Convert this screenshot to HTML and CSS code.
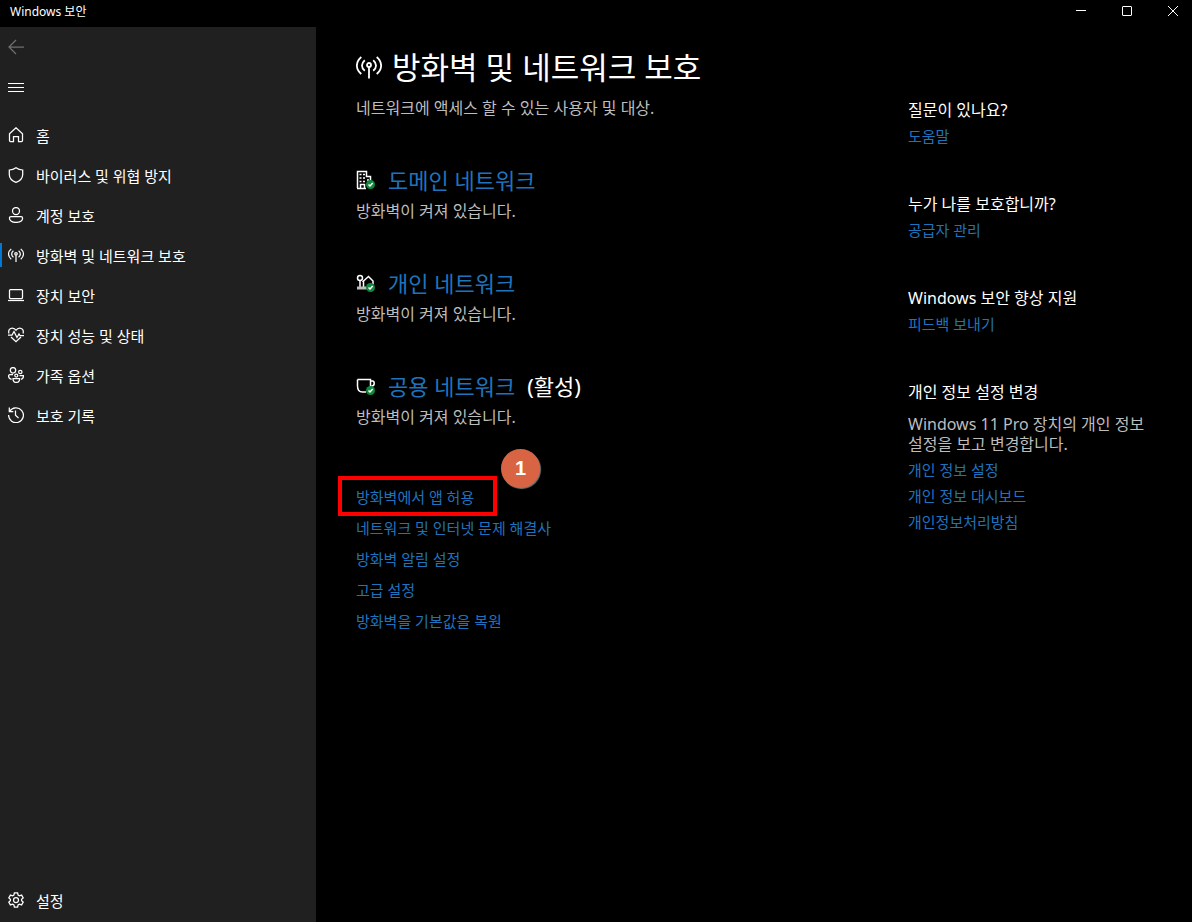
FILE: index.html
```html
<!DOCTYPE html>
<html lang="ko">
<head>
  <meta charset="UTF-8">
  <meta name="viewport" content="width=device-width, initial-scale=1.0">
  <title>Windows 보안</title>
  <link rel="stylesheet" href="styles.css">
</head>
<body>
  <header class="titlebar">
    <span class="titlebar-name">Windows 보안</span>
    <div class="window-controls">
      <button type="button" aria-label="최소화">
        <svg width="12" height="12" viewBox="0 0 12 12"><path d="M1 5.5h10"/></svg>
      </button>
      <button type="button" aria-label="최대화">
        <svg width="12" height="12" viewBox="0 0 12 12"><rect x="1.5" y="1.5" width="9" height="9" rx="0.5"/></svg>
      </button>
      <button type="button" aria-label="닫기">
        <svg width="12" height="12" viewBox="0 0 12 12"><path d="M1 1l10 10M11 1L1 11"/></svg>
      </button>
    </div>
  </header>

  <div class="layout">
    <nav class="sidebar">
      <button type="button" class="nav-button back" aria-label="뒤로" disabled>
        <svg class="icon" viewBox="0 0 16 16"><path d="M16 8H1M8 1L1 8l7 7"/></svg>
      </button>
      <button type="button" class="nav-button menu" aria-label="메뉴">
        <svg class="icon" viewBox="0 0 16 16"><path d="M0 4.5h16M0 8.5h16M0 12.5h16"/></svg>
      </button>

      <ul class="nav-list">
        <li><a class="nav-item" href="#home">
          <svg class="icon" viewBox="0 0 16 16"><path d="M1.5 6.8L8 .8l6.500 6V13.500q0 1-1 1h-3V9.500h-5v5h-3q-1 0-1-1z"/></svg>
          <span>홈</span>
        </a></li>
        <li><a class="nav-item" href="#virus">
          <svg class="icon" viewBox="0 0 16 16"><path d="M8 .7c2 1.500 4.200 2.200 6.700 2.300v4.500c0 3.800-2.500 6.300-6.700 7.900-4.200-1.600-6.700-4.100-6.700-7.900V3C3.800 2.900 6 2.200 8 .7z"/></svg>
          <span>바이러스 및 위협 방지</span>
        </a></li>
        <li><a class="nav-item" href="#account">
          <svg class="icon" viewBox="0 0 16 16"><circle cx="8" cy="4" r="3.500"/><path d="M3 9.500h10c1 0 1.600.6 1.600 1.500 0 2.600-2.700 4.400-6.600 4.400S1.400 13.600 1.400 11c0-.9.6-1.500 1.600-1.500z"/></svg>
          <span>계정 보호</span>
        </a></li>
        <li><a class="nav-item active" href="#firewall" aria-current="page">
          <svg class="icon" viewBox="0 0 26 24"><use href="#antenna"/></svg>
          <span>방화벽 및 네트워크 보호</span>
        </a></li>
        <li><a class="nav-item" href="#device">
          <svg class="icon" viewBox="0 0 16 16"><rect x="1.500" y="2.500" width="13" height="9" rx="1"/><path d="M0 13.500h16"/></svg>
          <span>장치 보안</span>
        </a></li>
        <li><a class="nav-item" href="#health">
          <svg class="icon" viewBox="0 0 16 16"><path d="M1 6.500C-.2 2.800 2.300 1 4.300 1 6 1 7.300 2 8 3.200 8.700 2 10 1 11.700 1c2 0 4.500 1.800 3.300 5.500M3 10l5 4.700 5-4.700M0 8h4l2-3.500 3 6L11 7l1 1.500h4"/></svg>
          <span>장치 성능 및 상태</span>
        </a></li>
        <li><a class="nav-item" href="#family">
          <svg class="icon" viewBox="0 0 16 16"><circle cx="5" cy="3.300" r="2.700"/><circle cx="12.300" cy="5" r="1.700"/><circle cx="8.300" cy="8.500" r="1.500"/><path d="M5 7.500H1.800C.9 7.500.6 8.200.6 9c0 1.800 1.200 3 3 3.300M11.500 8.500h3.900c.3 2.200-.8 3.500-2.400 3.800M5 11.700h6.600c0 2.500-1.300 3.700-3.300 3.700S5 14.200 5 11.700z"/></svg>
          <span>가족 옵션</span>
        </a></li>
        <li><a class="nav-item" href="#history">
          <svg class="icon" viewBox="0 0 16 16"><path d="M1.300 .5v4h4M1.600 4.500A7.400 7.400 0 1 1 .6 8M7.500 3.500V8.300l3 2.700"/></svg>
          <span>보호 기록</span>
        </a></li>
      </ul>

      <a class="nav-item settings" href="#settings">
        <svg class="icon" viewBox="0 0 16 16"><circle cx="8" cy="8" r="2.500"/><path d="M6.400.8h3.200l.5 2.200 1.300.8 2.200-.7 1.600 2.800L13.600 7.300v1.400l1.600 1.400-1.600 2.800-2.200-.7-1.300.8-.5 2.200H6.400L5.900 13l-1.300-.8-2.200.7L.8 10.100l1.600-1.400V7.300L.8 5.900l1.600-2.800 2.200.7L5.900 3z"/></svg>
        <span>설정</span>
      </a>
    </nav>

    <main class="content">
      <h1>
        <svg class="title-icon" viewBox="0 0 26 24">
          <g id="antenna">
            <path d="M5.300 2C-.6 7-.6 14 5.300 19M20.700 2c5.900 5 5.900 12 0 17M8.800 5.200c-3.800 3.200-3.800 7.500 0 10.600M17.200 5.200c3.800 3.200 3.800 7.500 0 10.600M13 12v11.500"/>
            <circle cx="13" cy="10" r="2"/>
          </g>
        </svg>
        방화벽 및 네트워크 보호
      </h1>
      <p class="description">네트워크에 액세스 할 수 있는 사용자 및 대상.</p>

      <section class="network">
        <h2>
          <svg class="network-icon" viewBox="0 0 20 20">
            <path d="M1.500 18V1.500h9v5h4V11M1 18.500h9M4.500 18v-3.500h4V18"/>
            <path d="M3.500 4.500h2M7 4.500h2M3.500 8h2M7 8h2M3.500 11.500h2M7 11.500h2M11 10h2"/>
            <g id="check">
              <circle class="check-disc" cx="14.500" cy="14.500" r="4.500"/>
              <path class="check-mark" d="M12.500 14.500l1.500 1.500 2.700-3"/>
            </g>
          </svg>
          <a href="#domain">도메인 네트워크</a>
        </h2>
        <p>방화벽이 켜져 있습니다.</p>
      </section>

      <section class="network">
        <h2>
          <svg class="network-icon" viewBox="0 0 20 20">
            <circle cx="4" cy="5" r="2.500"/>
            <path d="M4 7.500V14M7.500 14V8l5-4.500 4.500 4.500v3M7.500 8L6.500 9"/>
            <path class="ground" d="M1 15h10"/>
            <use href="#check"/>
          </svg>
          <a href="#private">개인 네트워크</a>
        </h2>
        <p>방화벽이 켜져 있습니다.</p>
      </section>

      <section class="network">
        <h2>
          <svg class="network-icon" viewBox="0 0 20 20">
            <path d="M1.500 3.500h13v7.500M1.500 3.500V10c0 4 2 6 5 6H10M14.500 5h2c1.200 0 1.700 1 1.700 2.500S17 10 15.500 10"/>
            <use href="#check"/>
          </svg>
          <a href="#public">공용 네트워크</a>
          <span>(활성)</span>
        </h2>
        <p>방화벽이 켜져 있습니다.</p>
      </section>

      <ul class="link-list">
        <li class="highlighted">
          <a href="#allow-app">방화벽에서 앱 허용</a>
          <span class="highlight-box"></span>
          <span class="step-badge">1</span>
        </li>
        <li><a href="#troubleshoot">네트워크 및 인터넷 문제 해결사</a></li>
        <li><a href="#notifications">방화벽 알림 설정</a></li>
        <li><a href="#advanced">고급 설정</a></li>
        <li><a href="#restore">방화벽을 기본값을 복원</a></li>
      </ul>
    </main>

    <aside class="help">
      <section>
        <h3>질문이 있나요?</h3>
        <a href="#help">도움말</a>
      </section>
      <section>
        <h3>누가 나를 보호합니까?</h3>
        <a href="#providers">공급자 관리</a>
      </section>
      <section>
        <h3>Windows 보안 향상 지원</h3>
        <a href="#feedback">피드백 보내기</a>
      </section>
      <section>
        <h3>개인 정보 설정 변경</h3>
        <p>Windows 11 Pro 장치의 개인 정보 설정을 보고 변경합니다.</p>
        <a href="#privacy">개인 정보 설정</a>
        <a href="#dashboard">개인 정보 대시보드</a>
        <a href="#policy">개인정보처리방침</a>
      </section>
    </aside>
  </div>
</body>
</html>
```
FILE: styles.css
```css
:root {
  --bg: #000000;
  --bg-sidebar: #202020;
  --text: #ffffff;
  --text-muted: #bdbdbd;
  --link: #1f73bd;
  --accent: #0078d4;
  --success: #10893e;
  --highlight: #ff0000;
  --badge: #d96443;
}

* {
  box-sizing: border-box;
}

body {
  display: flex;
  flex-direction: column;
  min-height: 100vh;
  margin: 0;
  background-color: var(--bg);
  color: var(--text);
  font-family: "Noto Sans", "Noto Sans CJK KR", sans-serif;
  font-size: 15px;
  line-height: 20px;
  word-break: keep-all;
}

h1, h2, h3, p, ul {
  margin: 0;
  padding: 0;
  font-weight: 400;
}

ul {
  list-style: none;
}

a {
  color: var(--link);
  text-decoration: none;
}

a:hover {
  text-decoration: underline;
}

button {
  padding: 0;
  border: none;
  background: none;
  color: inherit;
}

svg {
  flex: none;
  fill: none;
  stroke: currentColor;
}

/* Title bar */
.titlebar {
  display: flex;
  justify-content: space-between;
  height: 27px;
  padding-left: 10px;
}

.titlebar-name {
  font-size: 12px;
  line-height: 24px;
}

.window-controls {
  display: flex;
  margin-right: -4px;
}

.window-controls button {
  display: flex;
  align-items: center;
  justify-content: center;
  width: 46px;
  height: 22px;
}

.layout {
  display: flex;
  flex: 1;
}

/* Sidebar */
.sidebar {
  display: flex;
  flex-direction: column;
  flex: none;
  width: 316px;
  padding-bottom: 2px;
  background-color: var(--bg-sidebar);
}

.icon {
  width: 16px;
  height: 16px;
  stroke-width: 1.25;
}

.nav-button {
  display: flex;
  align-items: center;
  height: 40px;
  padding-left: 8px;
}

.back {
  color: #6e6e6e;
}

.menu .icon {
  stroke-width: 1;
}

.nav-list {
  margin-top: 8px;
}

.nav-item {
  display: flex;
  align-items: center;
  gap: 12px;
  height: 40px;
  padding-left: 8px;
  color: var(--text);
}

.nav-item span {
  padding-top: 2px;
}

.nav-item.active {
  background: linear-gradient(var(--accent), var(--accent)) left center / 2px 24px no-repeat;
}

.nav-item.active .icon {
  stroke-width: 2;
}

.settings {
  margin-top: auto;
}

/* Main column */
.content {
  flex: 1;
  padding: 20px 40px;
}

h1 {
  display: flex;
  align-items: center;
  gap: 10px;
  font-size: 31px;
  line-height: 40px;
}

.title-icon {
  width: 26px;
  height: 24px;
  stroke-width: 1.8;
}

.description {
  margin-top: 11px;
  color: var(--text-muted);
  font-size: 16px;
}

.network {
  margin-top: 47px;
}

.network h2 {
  display: flex;
  align-items: center;
  gap: 12px;
  font-size: 22px;
  line-height: 30px;
}

.network-icon {
  width: 20px;
  height: 20px;
  stroke-width: 1.5;
}

.check-disc {
  fill: var(--success);
  stroke: none;
}

.ground {
  stroke: #bdbdbd;
  stroke-width: 3;
}

.network p {
  margin-top: 6px;
  color: var(--text-muted);
  font-size: 16px;
}

.link-list {
  margin-top: 55px;
  line-height: 31px;
}

/* Step marker over the first link */
.highlighted {
  position: relative;
}

.highlight-box {
  position: absolute;
  top: -6px;
  left: -18px;
  width: 159px;
  height: 40px;
  border: 4px solid var(--highlight);
  pointer-events: none;
}

.step-badge {
  position: absolute;
  top: -33px;
  left: 145px;
  width: 39px;
  height: 39px;
  border-radius: 50%;
  background-color: var(--badge);
  box-shadow: 1px 1px 1px #777777;
  font-family: "Liberation Sans", sans-serif;
  font-size: 20px;
  font-weight: 700;
  line-height: 38px;
  text-align: center;
}

/* Help column */
.help {
  display: flex;
  flex-direction: column;
  flex: none;
  gap: 48px;
  width: 284px;
  padding: 73px 40px 20px 0;
}

.help section {
  display: flex;
  flex-direction: column;
  align-items: flex-start;
  gap: 6px;
}

.help h3,
.help p {
  font-size: 16px;
}

.help p {
  margin-top: 6px;
  color: var(--text-muted);
}
```
